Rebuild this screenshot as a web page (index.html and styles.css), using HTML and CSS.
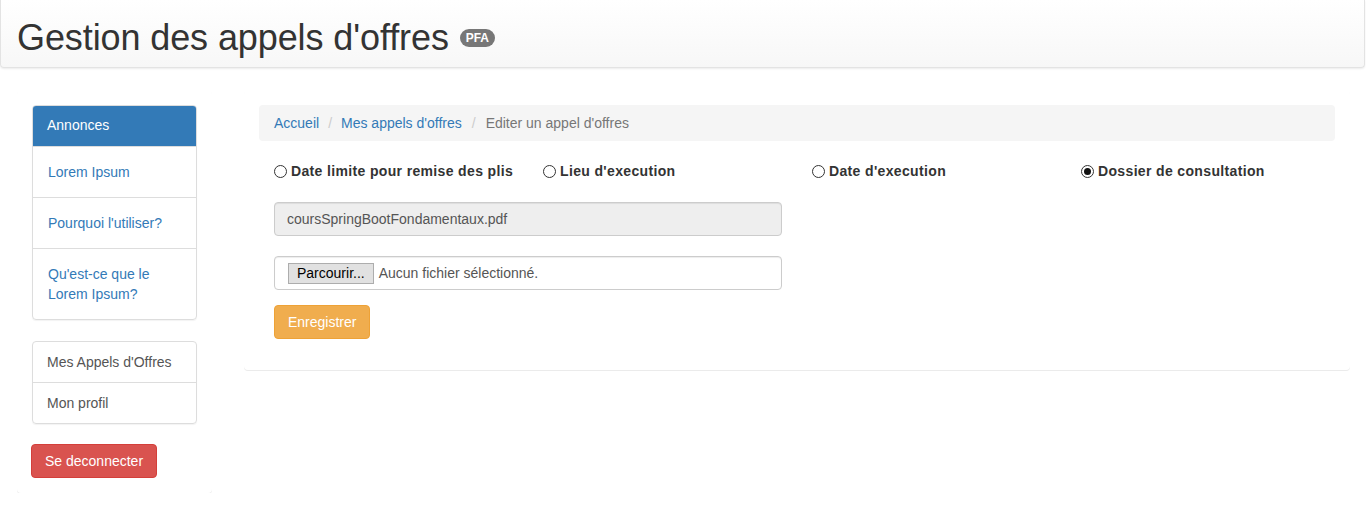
FILE: index.html
```html
<!DOCTYPE html>
<html lang="fr">
<head>
<meta charset="utf-8">
<title>Gestion des appels d'offres</title>
<link rel="stylesheet" href="styles.css">
</head>
<body>
<header class="topbar">
  <h1 class="title">Gestion des appels d'offres <span class="badge">PFA</span></h1>
</header>
<div class="layout">
  <aside class="panel side">
    <div class="list-group">
      <div class="lg-item lg-active">Annonces</div>
      <a class="lg-item lg-link" href="#">Lorem Ipsum</a>
      <a class="lg-item lg-link" href="#">Pourquoi l'utiliser?</a>
      <a class="lg-item lg-link" href="#">Qu'est-ce que le Lorem Ipsum?</a>
    </div>
    <div class="list-group list-plain">
      <a class="lg-item lg-plain" href="#">Mes Appels d'Offres</a>
      <a class="lg-item lg-plain" href="#">Mon profil</a>
    </div>
    <button class="btn btn-danger" type="button">Se deconnecter</button>
  </aside>
  <main class="panel main">
    <ol class="breadcrumb">
      <li><a href="#">Accueil</a></li>
      <li class="sep">/</li>
      <li><a href="#">Mes appels d'offres</a></li>
      <li class="sep">/</li>
      <li class="current">Editer un appel d'offres</li>
    </ol>
    <form class="form">
      <div class="radio-row">
        <label class="radio"><input type="radio" name="s"><span>Date limite pour remise des plis</span></label>
        <label class="radio"><input type="radio" name="s"><span>Lieu d'execution</span></label>
        <label class="radio"><input type="radio" name="s"><span>Date d'execution</span></label>
        <label class="radio"><input type="radio" name="s" checked><span>Dossier de consultation</span></label>
      </div>
      <div class="half">
        <div class="form-group">
          <input class="form-control" type="text" value="coursSpringBootFondamentaux.pdf" disabled>
        </div>
        <div class="form-group file-group">
          <label class="form-control file-control">
            <span class="file-btn">Parcourir...</span>
            <span class="file-text">Aucun fichier sélectionné.</span>
          </label>
        </div>
        <button class="btn btn-warning" type="button">Enregistrer</button>
      </div>
    </form>
  </main>
</div>
</body>
</html>
```

FILE: styles.css
```css
* { box-sizing: border-box; }

body {
  margin: 0;
  font-family: "Liberation Sans", Arial, Helvetica, sans-serif;
  font-size: 14px;
  line-height: 1.42857;
  color: #333;
  background: #fff;
}

a { color: #337ab7; text-decoration: none; }

.topbar {
  height: 68px;
  padding: 18px 16px 0;
  background: linear-gradient(to bottom, #ffffff 0%, #f7f7f7 100%);
  border: 1px solid #e3e3e3;
  border-top: none;
  border-radius: 0 0 4px 4px;
  box-shadow: 0 1px 2px rgba(0, 0, 0, 0.08);
  margin-right: 1px;
}

.title {
  margin: 0;
  font-size: 36px;
  font-weight: 400;
  line-height: 1.1;
  color: #333;
  letter-spacing: -0.1px;
}

.badge {
  display: inline-block;
  vertical-align: middle;
  position: relative;
  top: -2px;
  left: 1px;
  padding: 3px 6px;
  font-size: 12px;
  font-weight: 700;
  line-height: 1;
  letter-spacing: 0;
  color: #fff;
  background: #777;
  border-radius: 10px;
}

.layout {
  display: grid;
  grid-template-columns: 195px 1fr;
  column-gap: 32px;
  align-items: start;
  padding: 22px 16px 0 17px;
}

.panel {
  background: #fff;
  border-radius: 4px;
  box-shadow: 0 1px 0 #ebebeb;
  padding: 15px;
}

.side { padding: 15px; }

.list-group {
  display: flex;
  flex-direction: column;
  margin-bottom: 21px;
  border: 1px solid #ddd;
  border-radius: 4px;
  box-shadow: 0 1px 1px rgba(0, 0, 0, 0.05);
  overflow: hidden;
}

.list-plain { margin-bottom: 20px; }

.lg-item {
  display: block;
  padding: 15px;
  border-top: 1px solid #ddd;
  line-height: 20px;
}

.lg-item:first-child { border-top: none; }

.lg-active {
  padding: 10px 14px;
  background: #337ab7;
  color: #fff;
  margin: -1px -1px 0;
  border: 1px solid #337ab7;
  border-radius: 4px 4px 0 0;
}

.lg-link { color: #337ab7; }

.lg-plain {
  padding: 10px 14px;
  color: #555;
}

.btn {
  display: inline-block;
  padding: 6px 12px;
  font-family: inherit;
  font-size: 14px;
  line-height: 20px;
  border: 1px solid transparent;
  border-radius: 4px;
  color: #fff;
  cursor: pointer;
}

.btn-danger {
  display: block;
  padding: 6px 13px;
  background: #d9534f;
  border-color: #d43f3a;
  margin-left: -1px;
}

.btn-warning {
  padding: 6px 13px;
  background: #f0ad4e;
  border-color: #eea236;
}

.main { padding-bottom: 31px; }

.breadcrumb {
  display: flex;
  list-style: none;
  margin: 0 0 20px;
  padding: 8px 15px;
  background: #f5f5f5;
  border-radius: 4px;
  line-height: 20px;
}

.breadcrumb .sep {
  color: #ccc;
  padding: 0 9px;
}

.breadcrumb .sep:nth-child(4) { padding: 0 10px; }

.breadcrumb .current { color: #777; }

.radio-row {
  display: grid;
  grid-template-columns: repeat(4, 1fr);
  margin: 1px 0 21px;
}

.radio {
  display: flex;
  align-items: center;
  padding-left: 15px;
  font-weight: 700;
  line-height: 20px;
  height: 20px;
  letter-spacing: 0.35px;
  cursor: pointer;
}

.radio input {
  appearance: none;
  -webkit-appearance: none;
  width: 13px;
  height: 13px;
  margin: 1px 4px 0 0;
  border: 1px solid #333;
  border-radius: 50%;
  background: #fff;
  flex: none;
  display: grid;
  place-items: center;
}

.radio input:checked::after {
  content: "";
  width: 7px;
  height: 7px;
  border-radius: 50%;
  background: #111;
}

.half {
  width: 50%;
  padding: 0 15px;
}

.form-group { margin-bottom: 20px; }

.file-group { margin-bottom: 15px; }

.form-control {
  display: block;
  width: 100%;
  height: 34px;
  padding: 6px 12px;
  font-family: inherit;
  font-size: 14px;
  line-height: 20px;
  color: #555;
  background: #fff;
  border: 1px solid #ccc;
  border-radius: 4px;
  box-shadow: inset 0 1px 1px rgba(0, 0, 0, 0.075);
}

.form-control:disabled {
  background: #eee;
  color: #555;
  opacity: 1;
}

.file-control {
  display: flex;
  align-items: center;
  padding: 0 13px;
  cursor: pointer;
}

.file-btn {
  display: inline-block;
  height: 21px;
  padding: 0 8px;
  line-height: 19px;
  color: #000;
  background: #e1e1e1;
  border: 1px solid #adadad;
  margin-right: 5px;
}

.file-text { color: #555; }
```
